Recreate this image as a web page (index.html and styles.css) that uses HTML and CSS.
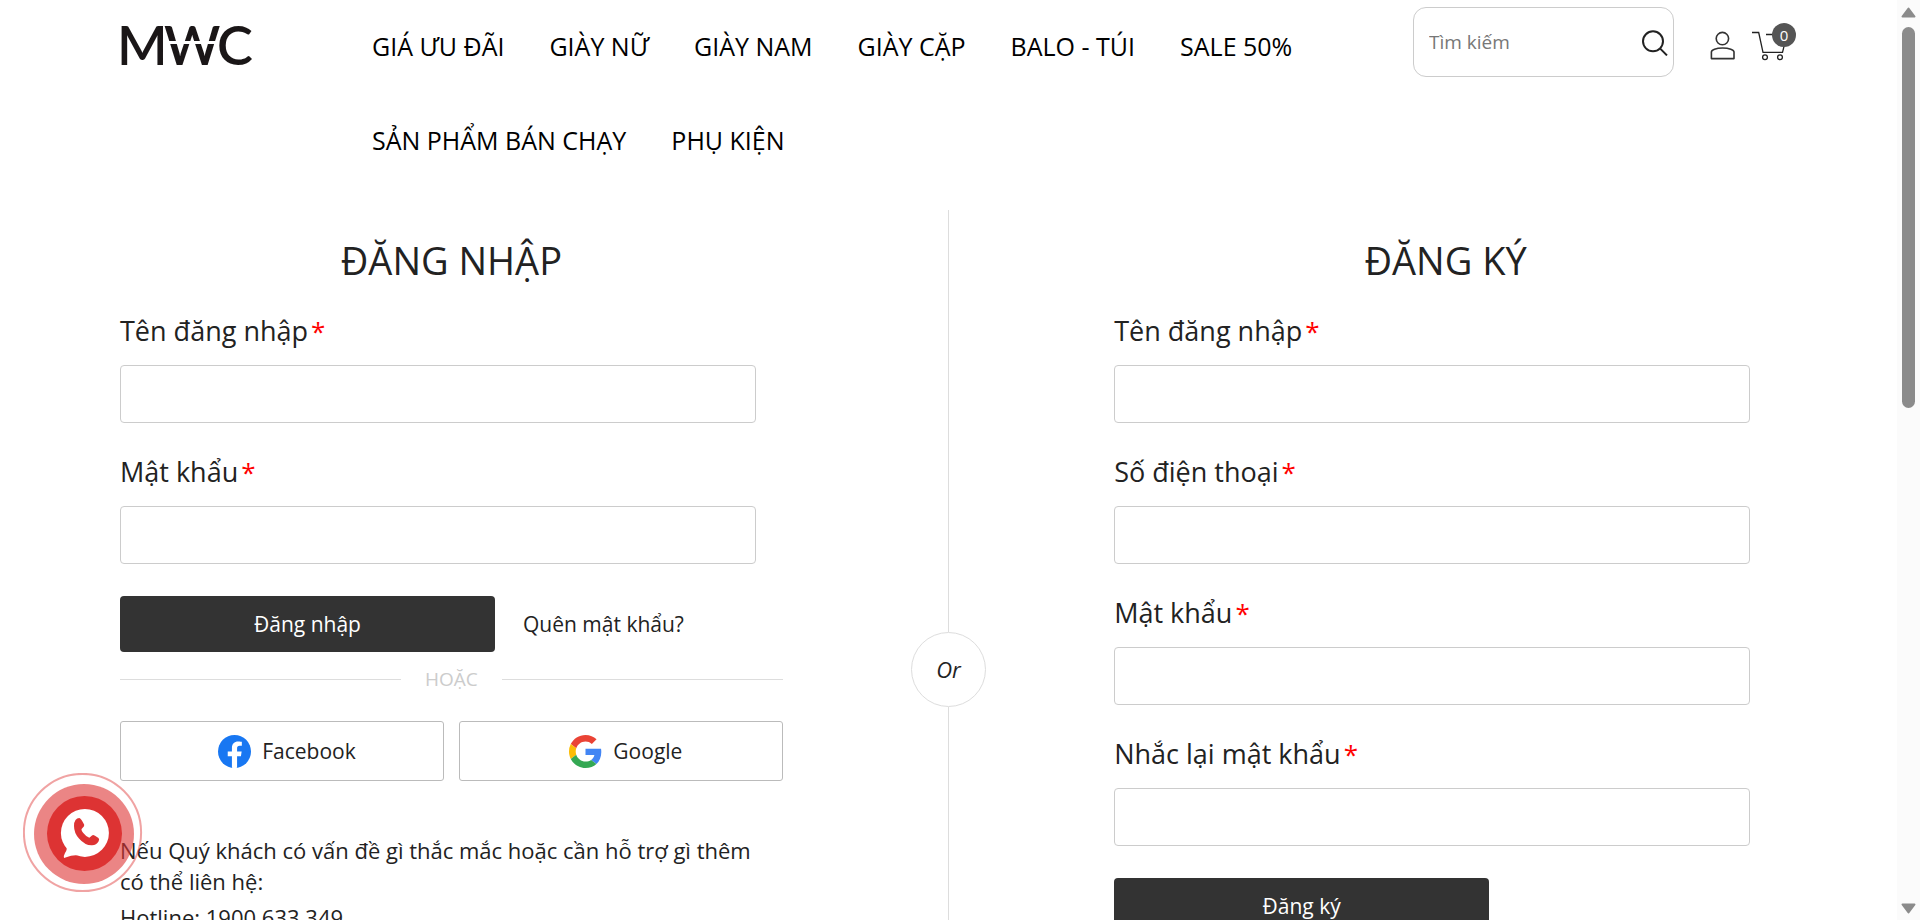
FILE: index.html
```html
<!DOCTYPE html>
<html lang="vi">
<head>
<meta charset="utf-8">
<title>MWC - Đăng nhập</title>
<link rel="stylesheet" href="styles.css">
</head>
<body>
<div class="page">
  <header class="header">
    <a class="logo" href="#" aria-label="MWC">
      <svg width="144" height="72" viewBox="0 0 144 72">
        <text class="logo-text" y="55" x="-3 44 97">MWC</text>
        <path d="M45 32.500H99" stroke="#fff" stroke-width="3"/>
      </svg>
    </a>
    <nav class="nav">
      <a href="#">GIÁ ƯU ĐÃI</a>
      <a href="#">GIÀY NỮ</a>
      <a href="#">GIÀY NAM</a>
      <a href="#">GIÀY CẶP</a>
      <a href="#">BALO - TÚI</a>
      <a href="#">SALE 50%</a>
      <a href="#">SẢN PHẨM BÁN CHẠY</a>
      <a href="#">PHỤ KIỆN</a>
    </nav>
    <form class="search">
      <input type="search" placeholder="Tìm kiếm" aria-label="Tìm kiếm">
      <button type="button" aria-label="Tìm">
        <svg width="26" height="27" viewBox="0 0 26 27" fill="none" stroke="#222" stroke-width="2"><circle cx="11" cy="12.300" r="10"/><path d="M18 19.400l7 7"/></svg>
      </button>
    </form>
    <div class="tools">
      <a href="#" aria-label="Tài khoản">
        <svg width="26" height="30" viewBox="0 0 26 30" fill="none" stroke="#333" stroke-width="1.6"><circle cx="12.4" cy="7.6" r="6.2"/><path d="M1.4 27.6V21C1.4 18.8 6 17 12.6 17S24 18.8 24 21V27.6Z" stroke-linejoin="round"/></svg>
      </a>
      <a class="cart" href="#" aria-label="Giỏ hàng">
        <svg width="38" height="31" viewBox="0 0 38 31" fill="none" stroke="#222" stroke-width="1.3"><path d="M1 2.5H7.7L12 22.4H31.5L36 4.5H15"/><circle cx="14" cy="27.3" r="2.4"/><circle cx="29" cy="27.3" r="2.4"/></svg>
        <span class="badge">0</span>
      </a>
    </div>
  </header>

  <main class="account">
    <section class="panel">
      <h1>ĐĂNG NHẬP</h1>
      <form>
        <div class="field"><label for="login-name">Tên đăng nhập<span class="req">*</span></label><input id="login-name" type="text"></div>
        <div class="field"><label for="login-pass">Mật khẩu<span class="req">*</span></label><input id="login-pass" type="password"></div>
        <div class="actions">
          <button class="submit" type="button">Đăng nhập</button>
          <a href="#">Quên mật khẩu?</a>
        </div>
      </form>
      <div class="separator"><span>HOẶC</span></div>
      <div class="social">
        <button type="button">
          <svg width="33" height="33" viewBox="0 0 24 24"><circle cx="12" cy="12" r="12" fill="#1877f2"/><path fill="#fff" d="M16.67 15.47L17.2 12h-3.33V9.75c0-.95.47-1.87 1.96-1.87h1.51V4.92s-1.37-.23-2.68-.23c-2.74 0-4.53 1.66-4.53 4.67V12H7.08v3.47h3.05v8.38a12.1 12.1 0 0 0 3.74 0v-8.38z"/></svg>
          Facebook
        </button>
        <button type="button">
          <svg width="33" height="33" viewBox="0 0 48 48"><path fill="#EA4335" d="M24 9.5c3.54 0 6.71 1.22 9.21 3.6l6.85-6.85C35.9 2.38 30.47 0 24 0 14.62 0 6.51 5.38 2.56 13.22l7.98 6.19C12.43 13.72 17.74 9.5 24 9.5z"/><path fill="#4285F4" d="M46.98 24.55c0-1.57-.15-3.09-.38-4.55H24v9.02h12.94c-.58 2.96-2.26 5.48-4.78 7.18l7.73 6c4.51-4.18 7.09-10.36 7.09-17.65z"/><path fill="#FBBC05" d="M10.53 28.59A14.5 14.5 0 0 1 9.77 24c0-1.6.27-3.14.76-4.59l-7.98-6.19A23.9 23.9 0 0 0 0 24c0 3.88.92 7.54 2.56 10.78z"/><path fill="#34A853" d="M24 48c6.48 0 11.93-2.13 15.89-5.81l-7.73-6c-2.15 1.45-4.92 2.3-8.16 2.3-6.26 0-11.57-4.22-13.47-9.91l-7.98 6.19C6.51 42.62 14.62 48 24 48z"/></svg>
          Google
        </button>
      </div>
      <div class="help">
        <p>Nếu Quý khách có vấn đề gì thắc mắc hoặc cần hỗ trợ gì thêm có thể liên hệ:</p>
        <p>Hotline: 1900.633.349</p>
      </div>
    </section>

    <div class="divider"><span>Or</span></div>

    <section class="panel">
      <h1>ĐĂNG KÝ</h1>
      <form>
        <div class="field"><label for="reg-name">Tên đăng nhập<span class="req">*</span></label><input id="reg-name" type="text"></div>
        <div class="field"><label for="reg-phone">Số điện thoại<span class="req">*</span></label><input id="reg-phone" type="tel"></div>
        <div class="field"><label for="reg-pass">Mật khẩu<span class="req">*</span></label><input id="reg-pass" type="password"></div>
        <div class="field"><label for="reg-again">Nhắc lại mật khẩu<span class="req">*</span></label><input id="reg-again" type="password"></div>
        <div class="actions"><button class="submit" type="button">Đăng ký</button></div>
      </form>
    </section>
  </main>
</div>

<div class="scrollbar" aria-hidden="true">
  <svg width="15" height="11" viewBox="0 0 15 11"><path d="M7.5 1.5L13.5 9.5H1.5Z" fill="#8b8b8b" stroke="#8b8b8b" stroke-width="2" stroke-linejoin="round"/></svg>
  <div class="track"><div class="thumb"></div></div>
  <svg width="15" height="11" viewBox="0 0 15 11"><path d="M7.5 9.5L13.5 1.5H1.5Z" fill="#8b8b8b" stroke="#8b8b8b" stroke-width="2" stroke-linejoin="round"/></svg>
</div>

<a class="call" href="#" aria-label="Gọi hỗ trợ">
  <svg width="120" height="120" viewBox="0 0 120 120">
    <circle cx="59.5" cy="59.5" r="58.6" fill="none" stroke="#d33" stroke-opacity=".45" stroke-width="2"/>
    <circle cx="61" cy="61" r="50" fill="#d33" fill-opacity=".6"/>
    <circle cx="61.5" cy="60.5" r="37.5" fill="#d33"/>
    <circle cx="61.9" cy="59.9" r="24" fill="#fff"/>
    <path fill="#fff" d="M41 85Q40.300 83 42 80Q45 76 43 72L55 82Q48 82 41 85Z"/>
    <path fill="#d33" d="M52.500 47Q54 45 56.300 45Q58 45.500 60.300 50Q61.800 52 61 53.200L58.600 56Q58 57 60.300 60Q63 63.500 66.300 64.700L69 62.500Q70 61.500 72 62.700L75.500 65Q76.800 66 75.500 68.500Q73.500 72 69 72.300Q62 72.500 56 65.500Q51 60 51 53Q51 49 52.500 47Z"/>
  </svg>
</a>
</body>
</html>
```
FILE: styles.css
```css
* { box-sizing: border-box; }

body {
  margin: 0;
  height: 100vh;
  display: flex;
  overflow: hidden;
  background: #fff;
  color: #222;
  font-family: "Open Sans", "Noto Sans", sans-serif;
  font-size: 21px;
}

a { color: inherit; text-decoration: none; }
button, input { font: inherit; color: inherit; }
svg { display: block; flex: none; }

.page { flex: 1; min-width: 0; overflow: hidden; }

/* Header */
.header {
  display: flex;
  align-items: flex-start;
  padding: 0 101px 24px 120px;
}
.logo { width: 252px; padding-top: 10px; }
.logo svg { overflow: visible; }
.logo-text { font-family: Lato, sans-serif; font-size: 54px; font-weight: 600; fill: #1a1617; }
.nav {
  flex: 1;
  display: flex;
  flex-wrap: wrap;
  column-gap: 45px;
  row-gap: 2px;
  color: #000;
  font-size: 25px;
  font-weight: 500;
  line-height: 92px;
}
.search {
  display: flex;
  align-items: center;
  width: 261px;
  height: 70px;
  margin-top: 7px;
  padding: 0 5px 0 15px;
  border: 1px solid #ccc;
  border-radius: 13px;
}
.search input {
  flex: 1;
  min-width: 0;
  padding: 0;
  border: 0;
  outline: 0;
  background: none;
  font-size: 19px;
}
.search input::placeholder { color: #777; opacity: 1; }
.search button { padding: 0; border: 0; background: none; }
.tools {
  display: flex;
  align-items: center;
  gap: 15px;
  height: 91px;
  padding: 0 7px 0 36px;
}
.cart { position: relative; }
.badge {
  position: absolute;
  top: -7px;
  right: -7px;
  width: 24px;
  height: 24px;
  border-radius: 50%;
  background: #555;
  color: #fff;
  font-size: 15px;
  line-height: 24px;
  text-align: center;
}

/* Login and registration */
.account {
  display: grid;
  grid-template-columns: 2fr 1fr 2fr;
  padding: 0 120px;
}
.panel { padding: 22px 0 190px; }
.panel h1 {
  margin: 0 0 23px;
  font-size: 38px;
  font-weight: 400;
  line-height: 56px;
  text-align: center;
}
.field { width: 96%; margin-bottom: 29px; }
.field label {
  display: block;
  margin-bottom: 15px;
  font-size: 27px;
  line-height: 39px;
}
.field input {
  display: block;
  width: 100%;
  height: 58px;
  padding: 0 16px;
  border: 1px solid #ccc;
  border-radius: 4px;
}
.req { margin-left: 3px; color: #f00; font-size: 26px; line-height: 1; }
.actions {
  display: flex;
  align-items: center;
  gap: 28px;
  padding-top: 3px;
}
.submit {
  width: 375px;
  height: 56px;
  border: 0;
  border-radius: 4px;
  background: #333;
  color: #fff;
}
.separator {
  display: flex;
  align-items: center;
  gap: 24px;
  margin-bottom: 15px;
  color: #ccc;
  font-size: 19px;
  line-height: 54px;
}
.separator::before, .separator::after {
  content: "";
  flex: 1;
  border-top: 1px solid #ddd;
}
.social { display: flex; gap: 15px; }
.social button {
  flex: 1;
  display: flex;
  align-items: center;
  justify-content: center;
  gap: 11px;
  height: 60px;
  padding: 0 5px 0 15px;
  border: 1px solid #bbb;
  border-radius: 3px;
  background: #fff;
}
.help {
  padding: 54px 16px 0 0;
  font-size: 22px;
  line-height: 31px;
}
.help p { margin: 0 0 5px; }
.divider {
  display: flex;
  flex-direction: column;
  align-items: center;
}
.divider::before, .divider::after {
  content: "";
  flex: 1;
  border-left: 1px solid #ddd;
}
.divider span {
  width: 75px;
  height: 75px;
  border: 1px solid #ddd;
  border-radius: 50%;
  font-size: 22px;
  font-style: italic;
  line-height: 73px;
  text-align: center;
}

/* Scroll rail */
.scrollbar {
  display: flex;
  flex-direction: column;
  align-items: center;
  gap: 9px;
  width: 23px;
  padding: 7px 0 6px;
  background: #fbfbfb;
}
.track { flex: 1; }
.thumb { width: 13px; height: 44%; border-radius: 7px; background: #8b8b8b; }

/* Floating call button */
.call { position: fixed; left: 23px; bottom: 27px; }
```
